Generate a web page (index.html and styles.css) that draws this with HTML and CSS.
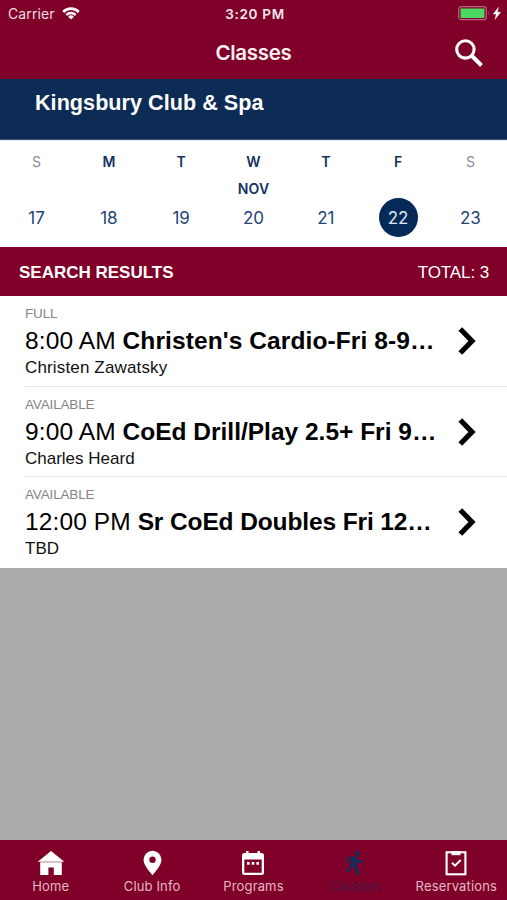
FILE: index.html
```html
<!DOCTYPE html>
<html lang="en">
<head>
<meta charset="utf-8">
<title>Classes</title>
<link rel="stylesheet" href="styles.css">
</head>
<body>
<div class="app">
  <header class="header">
    <div class="status">
      <div class="carrier"><span class="carrier-name">Carrier</span>
        <svg class="wifi" viewBox="0 0 18 13"><path d="M9 12.6 6.1 9.7a4.2 4.2 0 0 1 5.8 0zM3.5 7.1a7.7 7.7 0 0 1 11 0L12.900 8.900a5.500 5.500 0 0 0-7.800 0zM.3 3.900a12.200 12.200 0 0 1 17.400 0L15.900 5.900a9.800 9.800 0 0 0-13.800 0z" fill="#fff"/></svg>
      </div>
      <span class="time">3:20 PM</span>
      <svg class="battery" viewBox="0 0 44 15"><rect x=".7" y=".7" width="27.6" height="13" rx="2.8" fill="none" stroke="#b76880" stroke-width="1.2"/><rect x="2.5" y="2.5" width="24" height="9.4" rx=".8" fill="#4cd964"/><path d="M30 5.200q1.700 2 0 4z" fill="#b76880"/><path d="M40.500 1.300 35.200 8h3l-1.200 5.400 5.600-7.200h-3.200z" fill="#fff" stroke="#fff" stroke-width=".4"/></svg>
    </div>
    <div class="navbar">
      <h1 class="title">Classes</h1>
      <svg class="search" viewBox="0 0 28 28"><circle cx="10.4" cy="10.4" r="8.7" fill="none" stroke="#fff" stroke-width="3.1"/><path d="m17 17 9.5 9.5" stroke="#fff" stroke-width="4"/></svg>
    </div>
  </header>
  <div class="club"><span class="club-name">Kingsbury Club &amp; Spa</span></div>
  <section class="week">
    <div class="day off"><span class="dow">S</span><span class="month"></span><span class="num">17</span></div>
    <div class="day"><span class="dow">M</span><span class="month"></span><span class="num">18</span></div>
    <div class="day"><span class="dow">T</span><span class="month"></span><span class="num">19</span></div>
    <div class="day"><span class="dow">W</span><span class="month">NOV</span><span class="num">20</span></div>
    <div class="day"><span class="dow">T</span><span class="month"></span><span class="num">21</span></div>
    <div class="day"><span class="dow">F</span><span class="month"></span><span class="num selected">22</span></div>
    <div class="day off"><span class="dow">S</span><span class="month"></span><span class="num">23</span></div>
  </section>
  <div class="results"><b class="results-label">SEARCH RESULTS</b><span class="total">TOTAL: 3</span></div>
  <main class="list">
    <article class="row">
      <div class="info"><div class="state">FULL</div><div class="name"><span class="hour">8:00 AM</span> <b class="cardio">Christen's Cardio-Fri 8-9…</b></div><div class="coach wide">Christen Zawatsky</div></div>
      <svg class="chevron" viewBox="0 0 18 28"><path d="M2.300 2 14 14 2.300 26" fill="none" stroke="#000" stroke-width="5.200"/></svg>
    </article>
    <article class="row">
      <div class="info"><div class="state">AVAILABLE</div><div class="name"><span class="hour">9:00 AM</span> <b class="drill">CoEd Drill/Play 2.5+ Fri 9…</b></div><div class="coach">Charles Heard</div></div>
      <svg class="chevron" viewBox="0 0 18 28"><path d="M2.300 2 14 14 2.300 26" fill="none" stroke="#000" stroke-width="5.200"/></svg>
    </article>
    <article class="row">
      <div class="info"><div class="state">AVAILABLE</div><div class="name"><span class="hour">12:00 PM</span> <b class="doubles">Sr CoEd Doubles Fri 12…</b></div><div class="coach">TBD</div></div>
      <svg class="chevron" viewBox="0 0 18 28"><path d="M2.300 2 14 14 2.300 26" fill="none" stroke="#000" stroke-width="5.200"/></svg>
    </article>
  </main>
  <nav class="tabs">
    <div class="tab"><svg viewBox="0 0 28 26"><path d="M14 1 27.300 11.800H.7z" fill="#fff"/><path d="M3.200 12.300h21.600V25h-8v-7.500h-5.400V25H3.200z" fill="#fff"/></svg><span>Home</span></div>
    <div class="tab"><svg viewBox="0 0 28 26"><path fill-rule="evenodd" d="M14.500 .8a9 9 0 0 0-9 9c0 6 9 15.400 9 15.400s9-9.400 9-15.400a9 9 0 0 0-9-9zm0 5.800a3.200 3.200 0 1 1 0 6.400 3.200 3.200 0 0 1 0-6.400z" fill="#fff"/></svg><span>Club Info</span></div>
    <div class="tab"><svg viewBox="0 0 28 26"><path fill-rule="evenodd" d="M5.500 3H7V1h2.500v2h9V1H21v2h1.500Q25 3 25 5.500v17q0 2.500-2.500 2.500h-17Q3 25 3 22.500v-17Q3 3 5.500 3zM5.300 9.500v13.200h17.400V9.500z" fill="#fff"/><path d="M8 12h2.600v2.700H8zm4.700 0h2.600v2.700h-2.600zm4.700 0H20v2.700h-2.600z" fill="#fff"/></svg><span>Programs</span></div>
    <div class="tab active"><svg viewBox="0 0 28 26"><circle cx="16.500" cy="3.300" r="2.400" fill="#132c58"/><path d="m12 6 5 1.200-1.500 7.600 1.800 3.200.7 7.200h-2.800l-.8-5.700-3.400-2.700-2 4.800H4.500l-.5-2.200h3.500l2.300-6.900.9-4.300-2.500 1.400-1 3.600-2-.5.800-4.600z" fill="#132c58"/><path d="m15.500 8.500 2.300 3.500 5.200-.4" fill="none" stroke="#132c58" stroke-width="2.100"/></svg><span>Classes</span></div>
    <div class="tab"><svg viewBox="0 0 28 26"><rect x="4.600" y="2.300" width="18.800" height="22" fill="none" stroke="#fff" stroke-width="2.100"/><path d="M9.500 1h9v4.200h-9z" fill="#fff"/><path d="m10 12.700 3 3 5.700-5.700" fill="none" stroke="#fff" stroke-width="2"/></svg><span>Reservations</span></div>
  </nav>
</div>
</body>
</html>
```
FILE: styles.css
```css
* { box-sizing: border-box; }
body { margin: 0; font-family: "Liberation Sans", Arial, sans-serif; }
.app { width: 507px; height: 900px; display: flex; flex-direction: column; background: #aaa; overflow: hidden; }
svg { display: block; flex: none; }
span, b { white-space: nowrap; }
.header { height: 79px; background: #7f0028; color: #fff; font-family: Inter, sans-serif; }
.status { height: 27px; display: grid; grid-template-columns: 1fr auto 1fr; align-items: center; padding: 0 5px 0 8px; }
.carrier { display: flex; align-items: center; gap: 7px; font-size: 14px; letter-spacing: .1px; color: #f3dce3; }
.wifi { width: 18px; height: 13px; }
.time { font-size: 13.5px; font-weight: 600; color: #f8e7ec; letter-spacing: .7px; }
.battery { width: 44px; height: 15px; justify-self: end; }
.navbar { height: 52px; display: grid; grid-template-columns: 1fr auto 1fr; align-items: center; padding: 0 24px; }
.title { grid-column: 2; margin: 0; font-size: 20.5px; font-weight: 600; line-height: 28px; letter-spacing: -.3px; color: #fdf0f3; }
.search { width: 28px; height: 28px; justify-self: end; }
.club { height: 61px; padding: 11px 35px; background: #0c2c55; color: #fff; border-bottom: 1px solid #405777; }
.club-name { display: block; font-size: 21.6px; line-height: 26px; font-weight: 700; letter-spacing: .03px; }
.week { height: 107px; background: #fff; display: grid; grid-template-columns: repeat(7, 72.3px); justify-content: center; padding-top: 11px; border-top: 1px solid #dce5f1; color: #143260; font-family: Inter, sans-serif; }
.day { display: flex; flex-direction: column; align-items: center; }
.dow { height: 20px; line-height: 20px; font-size: 14px; font-weight: 600; }
.off .dow { font-weight: 400; color: #858d9c; }
.month { height: 26px; line-height: 34px; font-size: 14px; font-weight: 600; letter-spacing: .2px; }
.num { width: 39px; height: 39px; line-height: 40px; text-align: center; font-size: 17px; border-radius: 50%; color: #244475; }
.selected { background: #062a57; color: #dfe8f3; }
.results { height: 49px; background: #7f0028; color: #fff; display: flex; justify-content: space-between; align-items: center; padding: 2px 18px 0 19px; font-size: 17px; }
.total { letter-spacing: -.1px; }
.list { background: #fff; }
.row { display: flex; height: 90.5px; padding-left: 25px; background: linear-gradient(#e6e6e6, #e6e6e6) 25px 100% / 100% 1px no-repeat; }
.row:last-child { background: none; }
.info { width: 433px; padding-top: 9px; }
.state { font-size: 13.5px; line-height: 18px; color: #858585; letter-spacing: -.15px; }
.name { font-size: 24.5px; line-height: 36px; white-space: nowrap; color: #000; }
.hour { letter-spacing: .12px; }
.cardio { letter-spacing: .1px; }
.doubles { letter-spacing: -.12px; }
.coach { font-size: 17px; line-height: 18px; color: #111; }
.wide { letter-spacing: .15px; }
.chevron { width: 18px; height: 28px; margin-top: 31px; }
.tabs { height: 60px; margin-top: auto; background: #7f0028; display: grid; grid-template-columns: repeat(5, 1fr); font-family: Inter, sans-serif; }
.tab { display: flex; flex-direction: column; align-items: center; padding-top: 10px; font-size: 13px; line-height: 21px; color: #e5b9c6; letter-spacing: .15px; }
.tab svg { width: 28px; height: 26px; }
.tab.active { color: #4a1746; }
```
